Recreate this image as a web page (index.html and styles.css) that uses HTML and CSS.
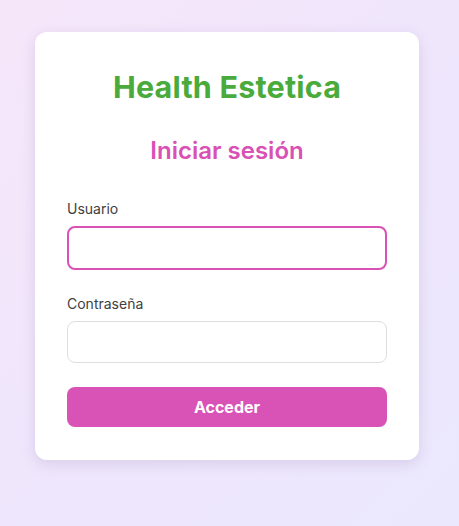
FILE: index.html
```html
<!DOCTYPE html>
<html lang="es">
<head>
<meta charset="utf-8">
<title>Health Estetica</title>
<link rel="stylesheet" href="styles.css">
</head>
<body>
<main class="card">
  <h1 class="brand">Health Estetica</h1>
  <h2 class="subtitle">Iniciar sesión</h2>
  <form class="form">
    <div class="field field-user">
      <label class="label" for="user">Usuario</label>
      <input class="input input-focus" id="user" type="text">
    </div>
    <div class="field">
      <label class="label" for="pass">Contraseña</label>
      <input class="input" id="pass" type="password">
    </div>
    <button class="btn" type="button">Acceder</button>
  </form>
</main>
</body>
</html>
```
FILE: styles.css
```css
* { box-sizing: border-box; }
html, body { height: 100%; }
body {
  margin: 0;
  padding: 32px 40px 0 35px;
  background: linear-gradient(135deg, #f6e6fa 0%, #efe6fc 50%, #ebe8fd 100%);
  font-family: "Inter", "Liberation Sans", sans-serif;
}
.card {
  width: 384px;
  background: #fff;
  border-radius: 12px;
  box-shadow: 0 4px 14px rgba(120, 90, 150, 0.18);
  padding: 36px 32px 33px;
}
.brand {
  margin: 0;
  text-align: center;
  color: #4aab3c;
  font-size: 30.5px;
  font-weight: 700;
  line-height: 38px;
  letter-spacing: 0.2px;
}
.subtitle {
  margin: 30px 0 0;
  text-align: center;
  color: #d951b4;
  font-size: 24px;
  font-weight: 600;
  line-height: 30px;
}
.form {
  margin-top: 34px;
  display: flex;
  flex-direction: column;
}
.field {
  display: flex;
  flex-direction: column;
  margin-bottom: 24px;
}
.field-user { margin-bottom: 25px; }
.label {
  font-size: 14px;
  font-weight: 400;
  color: #404040;
  line-height: 18px;
  margin-bottom: 8px;
}
.input {
  height: 42px;
  border: 1px solid #dedede;
  border-radius: 8px;
  background: #fff;
  font-size: 15px;
  padding: 0 12px;
  outline: none;
}
.input-focus {
  height: 44px;
  border: 2px solid #d951b4;
}
.btn {
  height: 40px;
  border: none;
  border-radius: 8px;
  background: #d953b7;
  color: #fff;
  font-family: inherit;
  font-size: 16px;
  font-weight: 700;
}
```
